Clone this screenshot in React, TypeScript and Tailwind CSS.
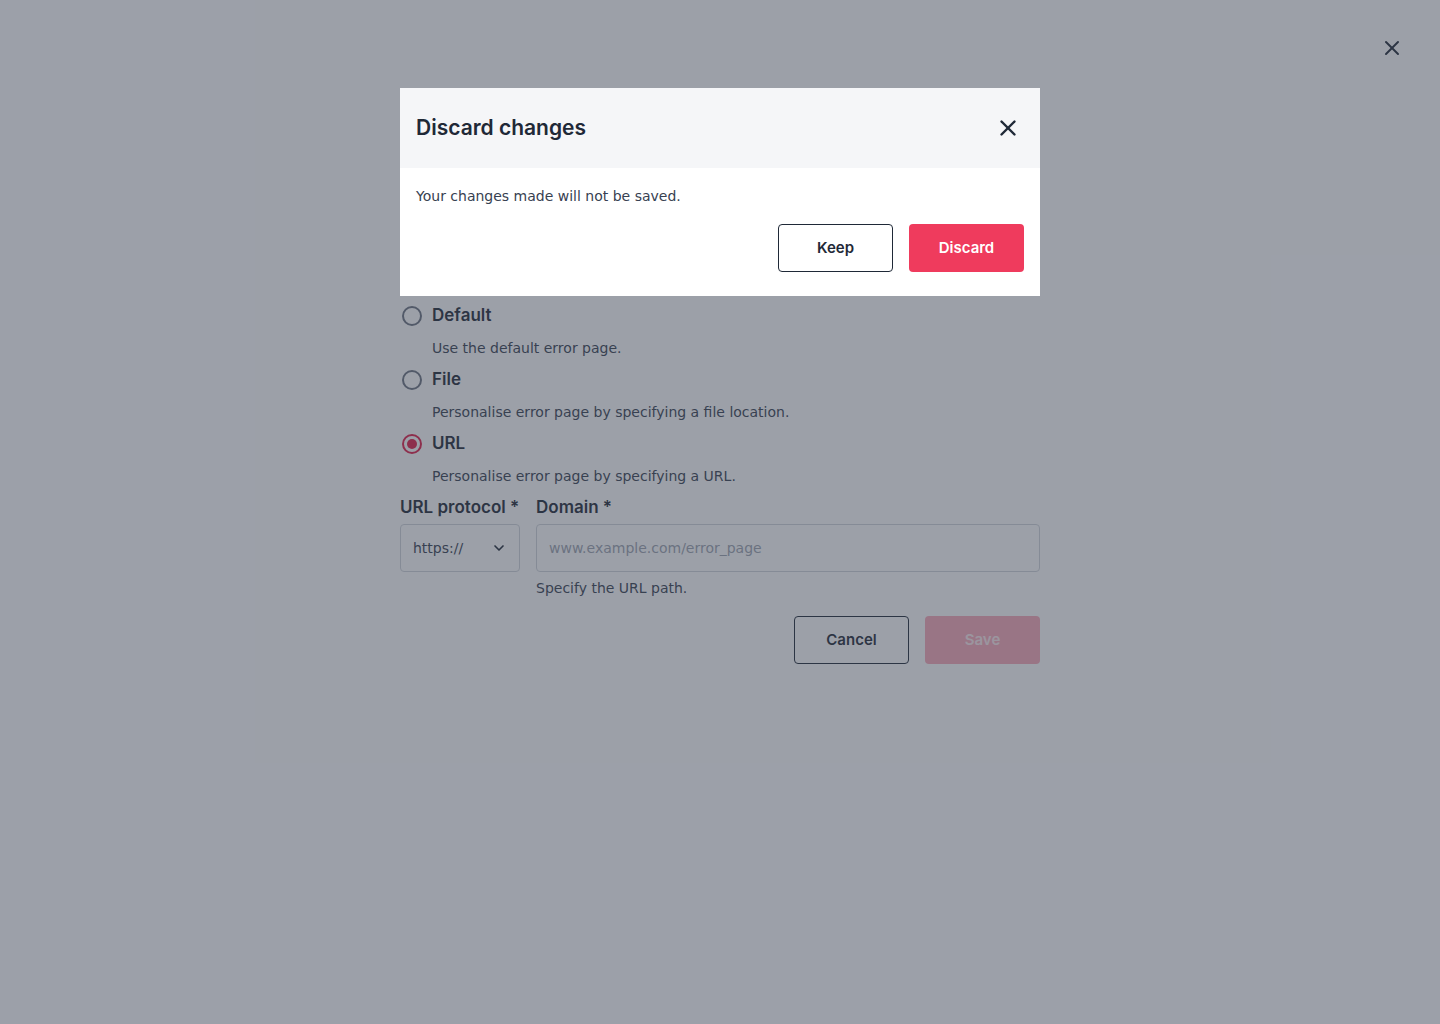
import { X, ChevronDown } from 'lucide-react';

const body = { fontFamily: '"DejaVu Sans", "Open Sans", sans-serif' };
const head = { fontFamily: 'Inter, "Open Sans", sans-serif' };

function Radio({ label, desc, checked }: { label: string; desc: string; checked?: boolean }) {
  return (
    <div>
      <div className="flex items-center h-8">
        <span
          className={`w-5 h-5 rounded-full border-2 flex items-center justify-center ml-0.5 ${
            checked ? 'border-[#e11d48]' : 'border-[#6b7280]'
          }`}
        >
          {checked && <span className="w-2.5 h-2.5 rounded-full bg-[#e11d48]" />}
        </span>
        <span className="ml-2.5 text-[17px] font-semibold text-[#1f2937]" style={head}>
          {label}
        </span>
      </div>
      <p className="pl-8 h-8 flex items-center text-[14px] text-[#374151]">{desc}</p>
    </div>
  );
}

export default function App() {
  return (
    <div className="relative w-full h-[1024px] bg-white overflow-hidden" style={body}>
      {/* page behind the overlay */}
      <div className="flex justify-end pt-9 pr-9">
        <X className="w-6 h-6 text-[#1f2937]" strokeWidth={2} />
      </div>
      <div className="w-[640px] mx-auto mt-[240px]">
        <Radio label="Default" desc="Use the default error page." />
        <Radio label="File" desc="Personalise error page by specifying a file location." />
        <Radio label="URL" desc="Personalise error page by specifying a URL." checked />
        <div className="flex gap-4">
          <div className="w-[120px]">
            <p className="h-8 flex items-center whitespace-nowrap text-[17px] font-semibold text-[#1f2937]" style={head}>
              URL protocol *
            </p>
            <div className="h-12 border border-[#d1d5db] rounded-sm flex items-center justify-between px-3 text-[14px] text-[#374151]">
              <span>https://</span>
              <ChevronDown className="w-4 h-4 text-[#1f2937]" strokeWidth={2.5} />
            </div>
          </div>
          <div className="flex-1">
            <p className="h-8 flex items-center text-[17px] font-semibold text-[#1f2937]" style={head}>
              Domain *
            </p>
            <div className="h-12 border border-[#d1d5db] rounded-sm flex items-center px-3 text-[14px] text-[#9ca3af]">
              www.example.com/error_page
            </div>
            <p className="h-8 flex items-center text-[14px] text-[#374151]">Specify the URL path.</p>
          </div>
        </div>
        <div className="flex justify-end gap-4 mt-3">
          <button
            className="w-[115px] h-12 border border-[#1f2937] rounded-sm text-[15px] font-semibold text-[#1f2937] bg-white"
            style={head}
          >
            Cancel
          </button>
          <button
            className="w-[115px] h-12 rounded-sm text-[15px] font-semibold text-[#fde8ec] bg-[#f9a8b8]"
            style={head}
          >
            Save
          </button>
        </div>
      </div>

      {/* overlay */}
      <div className="absolute inset-0 bg-[#394152]/50" />

      {/* modal */}
      <div className="absolute left-[400px] top-[88px] w-[640px] bg-white">
        <div className="h-20 bg-[#f5f6f8] flex items-center justify-between px-4">
          <h2 className="text-[21px] font-semibold text-[#1f2937]" style={head}>
            Discard changes
          </h2>
          <X className="w-[26px] h-[26px] text-[#1f2937] mr-[3px]" strokeWidth={2.25} />
        </div>
        <div className="px-4 pt-3 pb-6">
          <p className="h-8 flex items-center text-[14px] text-[#374151]">Your changes made will not be saved.</p>
          <div className="flex justify-end gap-4 mt-3">
            <button
              className="w-[115px] h-12 border border-[#1f2937] rounded-sm text-[15px] font-semibold text-[#1f2937] bg-white"
              style={head}
            >
              Keep
            </button>
            <button
              className="w-[115px] h-12 rounded-sm text-[15px] font-semibold text-white bg-[#ef3b5d]"
              style={head}
            >
              Discard
            </button>
          </div>
        </div>
      </div>
    </div>
  );
}
